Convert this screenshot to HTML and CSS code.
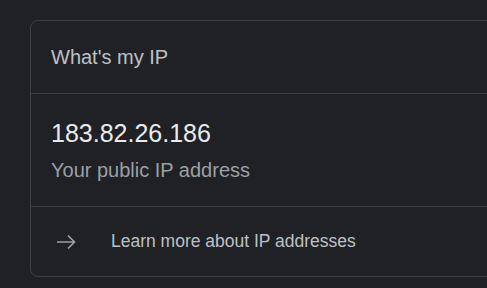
FILE: index.html
```html
<!DOCTYPE html>
<html lang="en">
<head>
    <meta charset="UTF-8">
    <meta name="viewport" content="width=device-width, initial-scale=1.0">
    <title>What's my IP</title>
    <link rel="stylesheet" href="styles.css">
</head>
<body>
    <div class="card">
        <div class="card-head">What's my IP</div>
        <div class="card-main">
            <div class="ip">183.82.26.186</div>
            <div class="ip-label">Your public IP address</div>
        </div>
        <a class="card-foot" href="#">
            <svg class="arrow" width="20" height="16" viewBox="0 0 20 16">
                <path d="M1 8H18.5M12 1.5L18.5 8L12 14.5" fill="none" stroke="#9aa0a6" stroke-width="1.7"/>
            </svg>
            <span>Learn more about IP addresses</span>
        </a>
    </div>
</body>
</html>
```

FILE: styles.css
```css
* {
    margin: 0;
    padding: 0;
    box-sizing: border-box;
}

body {
    background: #202124;
    font-family: "Liberation Sans", Arial, sans-serif;
    overflow: hidden;
    height: 288px;
}

.card {
    margin: 20px 0 0 30px;
    width: 540px;
    border: 1px solid #3c4043;
    border-radius: 8px;
    background: #202124;
}

.card-head {
    height: 73px;
    padding: 0 20px;
    display: flex;
    align-items: center;
    font-size: 20px;
    color: #bdc1c6;
    border-bottom: 1px solid #3c4043;
}

.card-main {
    height: 113px;
    padding: 25px 20px 0;
    border-bottom: 1px solid #3c4043;
}

.ip {
    font-size: 25px;
    line-height: 28px;
    color: #e8eaed;
}

.ip-label {
    margin-top: 11px;
    font-size: 20px;
    line-height: 24px;
    color: #9aa0a6;
}

.card-foot {
    height: 69px;
    padding-left: 25px;
    display: flex;
    align-items: center;
    text-decoration: none;
    font-size: 17.5px;
    color: #bdc1c6;
}

.arrow {
    margin-right: 35px;
    flex-shrink: 0;
}
```
